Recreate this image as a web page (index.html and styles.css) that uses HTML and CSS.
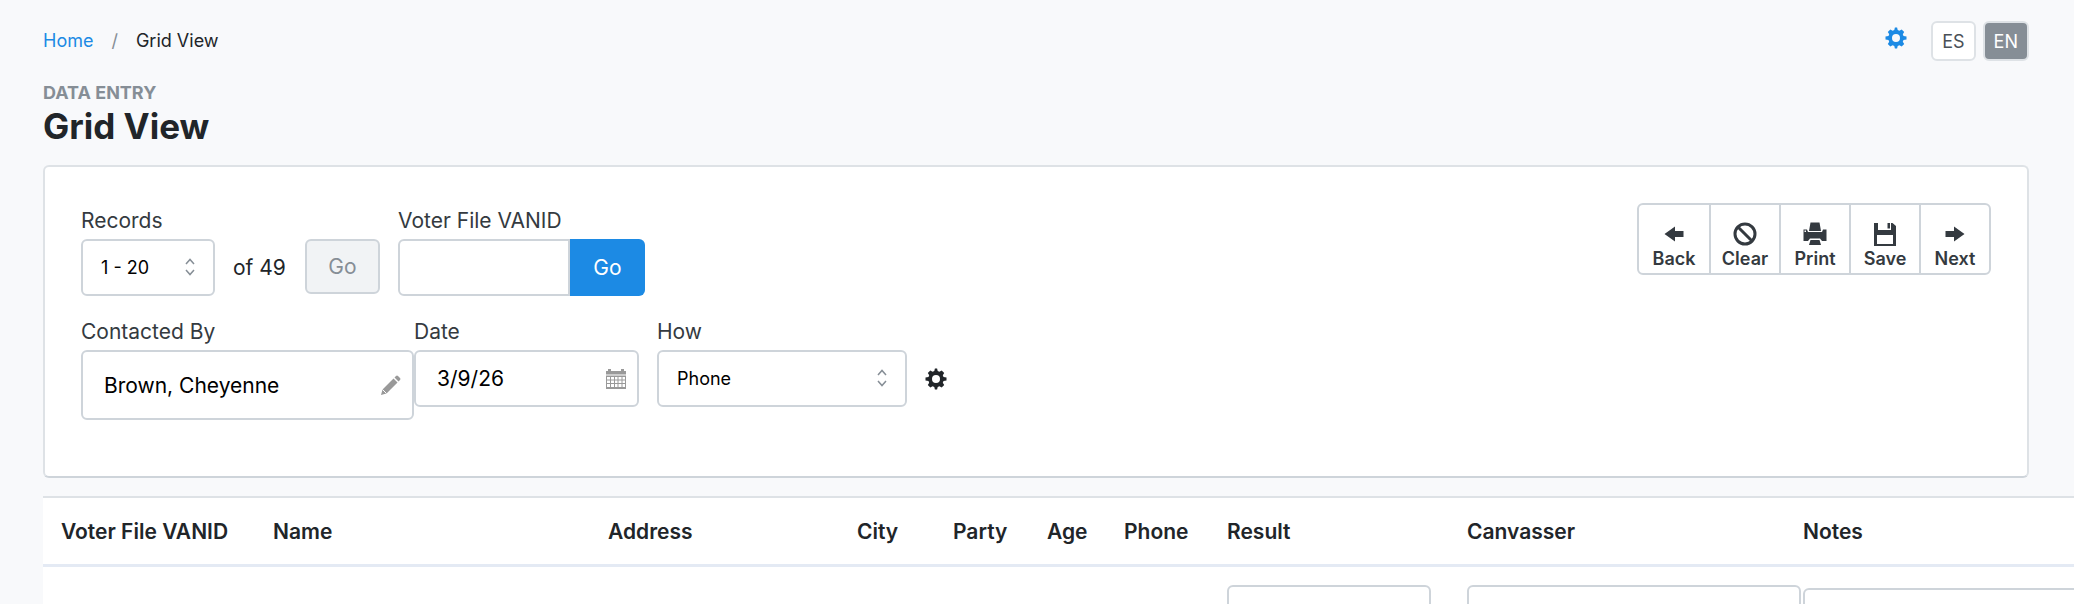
FILE: index.html
```html
<!DOCTYPE html>
<html lang="en">
<head>
  <meta charset="UTF-8">
  <meta name="viewport" content="width=device-width, initial-scale=1.0">
  <title>Grid View</title>
  <link rel="stylesheet" href="styles.css">
</head>
<body>
  <svg class="sprite" aria-hidden="true">
    <symbol id="icon-gear" viewBox="0 0 22 22">
      <path fill="currentColor" fill-rule="evenodd" d="M9.3 3.1 9.9.5h2.2l.6 2.6 1.7.7L16.700 2.400l2.500 2.500-1.400 2.300.7 1.700 3 .6v3l-3 .6-.7 1.700 1.400 2.300-2.500 2.500-2.300-1.400-1.700.7-.6 2.600H9.900l-.6-2.600-1.700-.7-2.300 1.400-2.500-2.500 1.400-2.300-.7-1.700-3-.6v-3l3-.6.7-1.700-1.400-2.300 2.500-2.500 2.300 1.400zM11 7a4 4 0 1 0 0 8 4 4 0 0 0 0-8z"/>
    </symbol>
    <symbol id="icon-updown" viewBox="0 0 10 18">
      <path fill="none" stroke="currentColor" stroke-width="1.500" d="M1 6l4-4.500L9 6M1 12l4 4.500L9 12"/>
    </symbol>
  </svg>

  <header class="topbar">
    <nav aria-label="Breadcrumb">
      <ol class="breadcrumb">
        <li><a href="#">Home</a></li>
        <li>Grid View</li>
      </ol>
    </nav>
    <div class="topbar-tools">
      <a class="settings-link" href="#" aria-label="Settings"><svg class="icon-gear"><use href="#icon-gear"/></svg></a>
      <div class="languages">
        <button type="button" class="lang">ES</button>
        <button type="button" class="lang active">EN</button>
      </div>
    </div>
  </header>

  <main>
    <div class="page-title">
      <p>DATA ENTRY</p>
      <h1>Grid View</h1>
    </div>

    <section class="panel">
      <form class="filters">
        <div class="filter-row">
          <div class="field">
            <label for="records">Records</label>
            <div class="records">
              <div class="select records-select">
                <select id="records"><option>1 - 20</option><option>21 - 40</option><option>41 - 49</option></select>
                <svg><use href="#icon-updown"/></svg>
              </div>
              <span class="total">of 49</span>
              <button type="button" class="btn btn-go" disabled>Go</button>
            </div>
          </div>
          <div class="field">
            <label for="vanid">Voter File VANID</label>
            <div class="input-group">
              <input id="vanid" type="text">
              <button type="button" class="btn btn-primary">Go</button>
            </div>
          </div>
        </div>

        <div class="filter-row">
          <div class="contact-fields">
            <div class="field">
              <label for="contacted">Contacted By</label>
              <div class="with-icon contacted">
                <input id="contacted" type="text" value="Brown, Cheyenne">
                <svg viewBox="0 0 20 20"><path fill="#999" d="M0 20l1.500-5.500L12.500 3.500l4 4L5.500 18.500zM13.500 2.500l1.500-1.500q1-1 2 0L19 3q1 1 0 2L17.500 6.500z"/><path stroke="#fff" d="M1.500 14.500l4 4"/></svg>
              </div>
            </div>
            <div class="field">
              <label for="date">Date</label>
              <div class="with-icon">
                <input id="date" class="date" type="text" value="3/9/26">
                <svg viewBox="0 0 20 20"><path fill="#999" d="M0 2h2V0h3v2h10V0h3v2h2v3.500H0zM0 6.500h20V20H0z"/><path fill="#fff" d="M1 8h3v2.500H1zM5 8h3v2.500H5zM9 8h2.500v2.500H9zM12.500 8h3v2.500h-3zM16.500 8h2.500v2.500h-2.500zM1 11.500h3V14H1zM5 11.500h3V14H5zM9 11.500h2.500V14H9zM12.500 11.500h3V14h-3zM16.500 11.500h2.500V14h-2.500zM1 15h3v3H1zM5 15h3v3H5zM9 15h2.500v3H9zM12.500 15h3v3h-3zM16.500 15h2.500v3h-2.500z"/></svg>
              </div>
            </div>
          </div>
          <div class="field">
            <label for="how">How</label>
            <div class="how">
              <div class="select how-select">
                <select id="how"><option>Phone</option><option>Walk</option><option>Mail</option></select>
                <svg><use href="#icon-updown"/></svg>
              </div>
              <button type="button" class="icon-btn" aria-label="Contact settings"><svg class="icon-gear"><use href="#icon-gear"/></svg></button>
            </div>
          </div>
        </div>
      </form>

      <div class="toolbar">
        <button type="button">
          <svg viewBox="0 0 24 24"><path fill="currentColor" d="M2.500 12L13 4.500V9h8.500v6H13v4.500z"/></svg>
          Back
        </button>
        <button type="button">
          <svg viewBox="0 0 24 24"><path fill="none" stroke="currentColor" stroke-width="3" d="M12 2a10 10 0 1 0 0 20 10 10 0 0 0 0-20zM5 5l14 14"/></svg>
          Clear
        </button>
        <button type="button">
          <svg viewBox="0 0 24 24"><path fill="currentColor" d="M7.500.500h9L18 9H6zM.500 7.500h3.500L5 10h14l1-2.500h3.500V19H19l-2-2.500H7L5 19H.500zM7.500 18h9l1.500 5H6z"/><path fill="#fff" d="M1.500 8.500H3V10H1.500z"/></svg>
          Print
        </button>
        <button type="button">
          <svg viewBox="0 0 24 24"><path fill="currentColor" fill-rule="evenodd" d="M1 1h4v7h13V1h1.500L23 4v20H1zM4 13v9h16v-9zM14.500 1h2.500v5.500h-2.500z"/></svg>
          Save
        </button>
        <button type="button">
          <svg viewBox="0 0 24 24"><path fill="currentColor" d="M21.500 12L11 4.500V9H2.500v6H11v4.500z"/></svg>
          Next
        </button>
      </div>
    </section>

    <div class="grid-wrap">
      <table class="grid">
        <colgroup>
          <col class="col-id">
          <col class="col-name">
          <col class="col-address">
          <col class="col-city">
          <col class="col-party">
          <col class="col-age">
          <col class="col-phone">
          <col class="col-result">
          <col class="col-canvasser">
          <col class="col-notes">
        </colgroup>
        <thead>
          <tr>
            <th>Voter File VANID</th>
            <th>Name</th>
            <th>Address</th>
            <th>City</th>
            <th>Party</th>
            <th>Age</th>
            <th>Phone</th>
            <th>Result</th>
            <th>Canvasser</th>
            <th>Notes</th>
          </tr>
        </thead>
        <tbody>
          <tr>
            <td></td>
            <td></td>
            <td></td>
            <td></td>
            <td></td>
            <td></td>
            <td></td>
            <td><select aria-label="Result"></select></td>
            <td class="cell-canvasser"><input type="text" aria-label="Canvasser"></td>
            <td class="cell-notes"><textarea aria-label="Notes"></textarea></td>
          </tr>
        </tbody>
      </table>
    </div>
  </main>
</body>
</html>
```
FILE: styles.css
```css
* {
  box-sizing: border-box;
}

body {
  margin: 0;
  padding: 21px 0 0 43px;
  background: #f8f9fb;
  color: #212529;
  font-family: Inter, "Liberation Sans", sans-serif;
  font-size: 21px;
}

a {
  color: #1c8ae4;
  text-decoration: none;
}

button,
input,
select,
textarea {
  font-family: inherit;
  font-size: 21px;
  color: #000;
}

.sprite {
  display: none;
}

.icon-gear {
  display: block;
  width: 22px;
  height: 22px;
}

/* top bar */

.topbar {
  display: flex;
  justify-content: space-between;
  align-items: center;
  height: 40px;
  margin-right: 45px;
}

.breadcrumb {
  display: flex;
  margin: 0;
  padding: 0 0 2px;
  list-style: none;
  font-size: 18px;
}

.breadcrumb li + li::before {
  content: "/";
  padding: 0 18px;
  color: #868e96;
}

.topbar-tools {
  display: flex;
  gap: 24px;
}

.settings-link {
  padding-top: 6px;
}

.languages {
  display: flex;
  gap: 7px;
}

.lang {
  height: 40px;
  padding: 0 9px;
  border: 2px solid #dee2e6;
  border-radius: 6px;
  background: #fff;
  color: #495057;
  font-size: 18px;
}

.lang.active {
  background: #868e96;
  color: #fff;
}

/* title */

.page-title {
  padding: 20px 0 18px;
}

.page-title p {
  margin: 0;
  color: #868e96;
  font-size: 18px;
  font-weight: 700;
  line-height: 24px;
}

h1 {
  margin: 0;
  font-size: 35px;
  font-weight: 700;
  line-height: 42px;
}

/* filter panel */

.panel {
  display: flex;
  justify-content: space-between;
  align-items: flex-start;
  margin-right: 45px;
  padding: 36px 36px 56px;
  border: 2px solid #dee2e6;
  border-bottom-color: #ced4da;
  border-radius: 6px;
  background: #fff;
}

.filters {
  display: flex;
  flex-direction: column;
  gap: 18px;
}

.filter-row,
.records,
.how {
  display: flex;
  gap: 18px;
}

.contact-fields,
.input-group {
  display: flex;
}

.field label {
  display: block;
  color: #343a40;
  line-height: 36px;
}

.select {
  position: relative;
}

.select svg {
  position: absolute;
  top: 19px;
  right: 20px;
  width: 10px;
  height: 18px;
  color: #868e96;
  pointer-events: none;
}

.field input,
.field select {
  display: block;
  width: 100%;
  height: 57px;
  border: 2px solid #ced4da;
  border-radius: 6px;
  background: #fff;
}

.field select {
  padding: 0 18px;
  font-size: 18px;
  appearance: none;
}

.records-select {
  width: 134px;
}

.how-select {
  width: 250px;
}

.total {
  min-width: 54px;
  line-height: 57px;
}

.btn {
  border: 0;
  border-radius: 6px;
  width: 75px;
}

.btn-go {
  height: 55px;
  border: 2px solid #ced4da;
  background: #f1f3f5;
  color: #868e96;
}

.btn-primary {
  border-radius: 0 6px 6px 0;
  background: #1c8ae4;
  color: #fff;
}

.field .input-group input {
  width: 172px;
  border-radius: 6px 0 0 6px;
}

.with-icon {
  position: relative;
}

.with-icon input {
  padding: 0 48px 0 21px;
}

.with-icon svg {
  position: absolute;
  top: 0;
  bottom: 0;
  right: 13px;
  width: 20px;
  height: 20px;
  margin: auto 0;
}

.contacted input {
  width: 333px;
  height: 70px;
}

.field .date {
  width: 225px;
}

.icon-btn {
  padding: 0;
  border: 0;
  background: none;
  color: #212529;
}

/* actions */

.toolbar {
  display: flex;
  border: 2px solid #ced4da;
  border-radius: 6px;
}

.toolbar button {
  display: flex;
  flex-direction: column;
  align-items: center;
  width: 70px;
  height: 68px;
  padding: 17px 0 0;
  border: 0;
  background: none;
  color: #343a40;
  font-size: 18px;
  font-weight: 600;
  line-height: 26px;
}

.toolbar button + button {
  border-left: 2px solid #ced4da;
}

.toolbar svg {
  width: 24px;
  height: 24px;
}

/* records grid */

.grid-wrap {
  margin-top: 18px;
  overflow: hidden;
  border-top: 2px solid #dee2e6;
  background: #fff;
}

.grid {
  width: 100%;
  min-width: 2300px;
  table-layout: fixed;
  border-collapse: separate;
  border-spacing: 0;
}

.grid th {
  height: 69px;
  padding: 0 0 0 18px;
  border-bottom: 3px solid #e4eaf4;
  font-weight: 600;
  text-align: left;
}

.grid td {
  padding: 18px 18px 0;
  vertical-align: top;
}

.grid td.cell-canvasser {
  padding-right: 0;
}

.grid td.cell-notes {
  padding-top: 21px;
}

.grid td select,
.grid td input,
.grid td textarea {
  display: block;
  width: 100%;
  height: 57px;
  border: 2px solid #ced4da;
  border-radius: 6px;
  background: #fff;
  appearance: none;
}

.grid td input {
  width: 334px;
}

.col-id { width: 212px; }
.col-name { width: 335px; }
.col-address { width: 249px; }
.col-city { width: 96px; }
.col-party { width: 94px; }
.col-age { width: 77px; }
.col-phone { width: 103px; }
.col-result { width: 240px; }
.col-canvasser { width: 336px; }
```
